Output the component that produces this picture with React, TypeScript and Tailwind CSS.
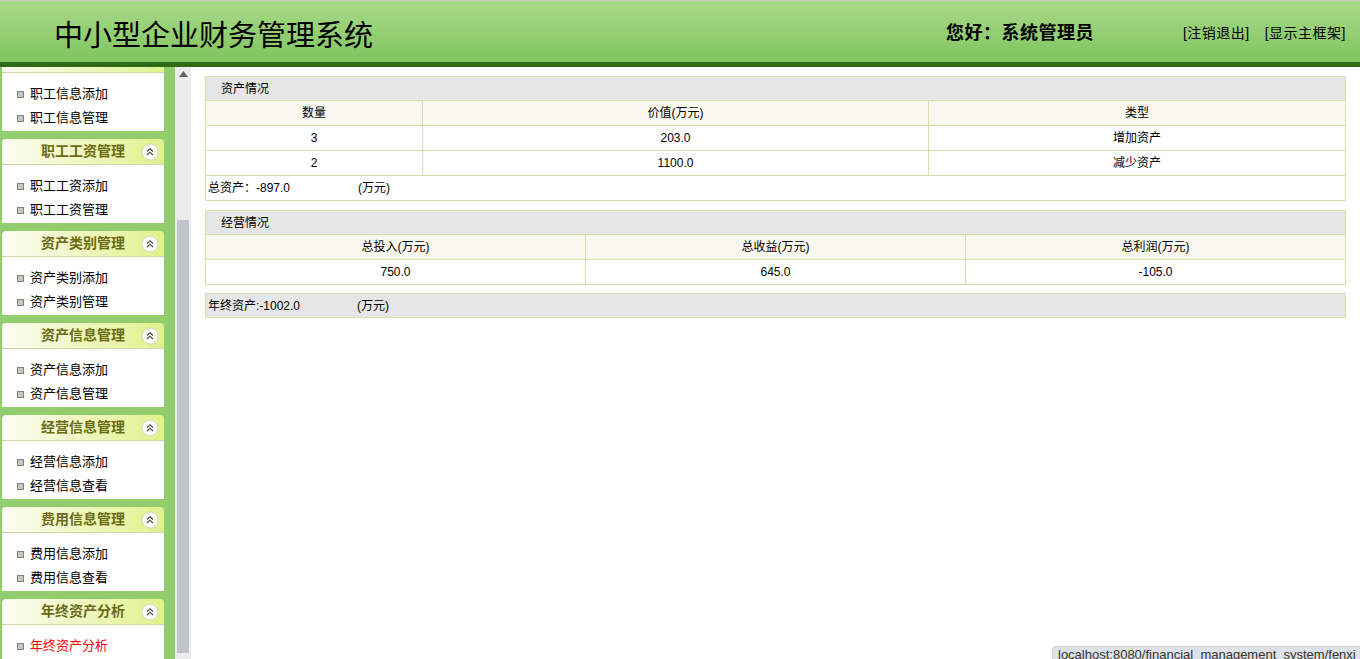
import type { ReactNode } from "react";

const MENUS: { title: string; items: string[] }[] = [
  { title: "", items: ["职工信息添加", "职工信息管理"] },
  { title: "职工工资管理", items: ["职工工资添加", "职工工资管理"] },
  { title: "资产类别管理", items: ["资产类别添加", "资产类别管理"] },
  { title: "资产信息管理", items: ["资产信息添加", "资产信息管理"] },
  { title: "经营信息管理", items: ["经营信息添加", "经营信息查看"] },
  { title: "费用信息管理", items: ["费用信息添加", "费用信息查看"] },
  { title: "年终资产分析", items: ["年终资产分析"] },
];

const FONT = "font-['Liberation_Sans','Noto_Sans_CJK_SC',sans-serif]";

function CollapseIcon() {
  return (
    <svg width="18" height="18" viewBox="0 0 18 18" className="shrink-0">
      <circle cx="9" cy="9" r="8" fill="#fbfbf6" stroke="#d3d8c0" strokeWidth="1" />
      <path d="M6 8.5 L9 5.8 L12 8.5" fill="none" stroke="#555" strokeWidth="1.3" />
      <path d="M6 12 L9 9.3 L12 12" fill="none" stroke="#555" strokeWidth="1.3" />
    </svg>
  );
}

function MenuPanel({ title, items }: { title: string; items: string[] }) {
  return (
    <div className="mb-[8px] ml-[2px] w-[162px]">
      <div className="relative flex h-[26px] items-center justify-center rounded-t-[4px] border-b border-[#cbd9a0] bg-gradient-to-r from-[#fbfcf2] via-[#eef7c0] to-[#e0f28c]">
        <span className="text-[14px] font-bold text-[#6b6b14]">{title}</span>
        <span className="absolute right-[5px] top-[4px]">
          <CollapseIcon />
        </span>
      </div>
      <div className="h-[58px] bg-white pt-[9px]">
        {items.map((item) => (
          <div key={item} className="flex h-[24px] items-center pl-[15px]">
            <span className="mr-[6px] inline-block h-[7px] w-[7px] border border-[#7d8478] bg-[#c4c8c0]" />
            <span className={`text-[13px] ${title === "年终资产分析" ? "text-[#ff0000]" : "text-black"}`}>
              {item}
            </span>
          </div>
        ))}
      </div>
    </div>
  );
}

function Cell({ children, head }: { children?: ReactNode; head?: boolean }) {
  return (
    <td
      className={`h-[25px] border border-[#d5e0ab] text-center align-middle ${head ? "bg-[#f8f8ef]" : "bg-white"}`}
    >
      {children}
    </td>
  );
}

export default function App() {
  return (
    <div className={`relative h-[659px] w-[1360px] overflow-hidden bg-white text-[12px] text-black ${FONT}`}>
      <header className="h-[67px] border-t border-[#c9c9c9] bg-gradient-to-b from-[#a9d98a] to-[#7cc35a]">
        <div className="flex h-[61px] items-center pt-[9px]">
          <h1 className="ml-[54px] text-[29px] leading-none text-black">中小型企业财务管理系统</h1>
          <div className="ml-auto mr-[89px] mt-[-5px] text-[18px] font-bold tracking-[0.5px] text-black">
            您好：系统管理员
          </div>
          <div className="mr-[14px] mt-[-5px] flex gap-[15px] text-[14px] tracking-[0.5px] text-black">
            <span>[注销退出]</span>
            <span>[显示主框架]</span>
          </div>
        </div>
        <div className="h-[5px] bg-[#2b6b14]" />
      </header>

      <div className="flex h-[592px]">
        <aside className="h-full w-[175px] shrink-0 overflow-hidden bg-[#91cd6c]">
          <div className="-mt-[20px]">
            {MENUS.map((m) => (
              <MenuPanel key={m.items[0]} title={m.title} items={m.items} />
            ))}
          </div>
        </aside>

        <div className="flex h-full w-[16px] shrink-0 flex-col bg-[#ececec]">
          <div className="flex h-[14px] items-center justify-center">
            <svg width="9" height="6" viewBox="0 0 9 6">
              <path d="M0 6 L4.5 0 L9 6 Z" fill="#5f6368" />
            </svg>
          </div>
          <div className="h-[139px]" />
          <div className="mx-[2px] flex-1 bg-[#c1c4c9]" />
          <div className="h-[6px]" />
        </div>

        <main className="flex-1 px-[14px] pt-[9px]">
          <table className="w-full border-collapse">
            <tbody>
              <tr>
                <td colSpan={3} className="h-[24px] border border-[#d5e0ab] bg-[#e6e6e6] pl-[15px]">资产情况</td>
              </tr>
              <tr>
                <td className="h-[25px] w-[217px] border border-[#d5e0ab] bg-[#f8f8ef] text-center">数量</td>
                <td className="w-[506px] border border-[#d5e0ab] bg-[#f8f8ef] text-center">价值(万元)</td>
                <Cell head>类型</Cell>
              </tr>
              <tr>
                <Cell>3</Cell>
                <Cell>203.0</Cell>
                <Cell>增加资产</Cell>
              </tr>
              <tr>
                <Cell>2</Cell>
                <Cell>1100.0</Cell>
                <Cell>减少资产</Cell>
              </tr>
              <tr>
                <td colSpan={3} className="h-[25px] border border-[#d5e0ab] pl-[2px]">
                  总资产：-897.0<span className="ml-[68px]">(万元)</span>
                </td>
              </tr>
            </tbody>
          </table>

          <table className="mt-[9px] w-full table-fixed border-collapse">
            <tbody>
              <tr>
                <td colSpan={3} className="h-[24px] border border-[#d5e0ab] bg-[#e6e6e6] pl-[15px]">经营情况</td>
              </tr>
              <tr>
                <Cell head>总投入(万元)</Cell>
                <Cell head>总收益(万元)</Cell>
                <Cell head>总利润(万元)</Cell>
              </tr>
              <tr>
                <Cell>750.0</Cell>
                <Cell>645.0</Cell>
                <Cell>-105.0</Cell>
              </tr>
            </tbody>
          </table>

          <div className="mt-[8px] flex h-[25px] items-center border border-[#d5e0ab] bg-[#e6e6e6] pl-[2px]">
            年终资产:-1002.0<span className="ml-[57px]">(万元)</span>
          </div>
        </main>
      </div>

      <div className="absolute bottom-0 right-0 h-[13px] w-[308px] overflow-hidden whitespace-nowrap rounded-tl-[4px] border-l border-t border-[#cfd2d6] bg-[#dee1e6] pl-[5px] font-['Liberation_Sans',sans-serif] text-[13px] leading-[15px] text-[#333]">
        localhost:8080/financial_management_system/fenxi
      </div>
    </div>
  );
}
